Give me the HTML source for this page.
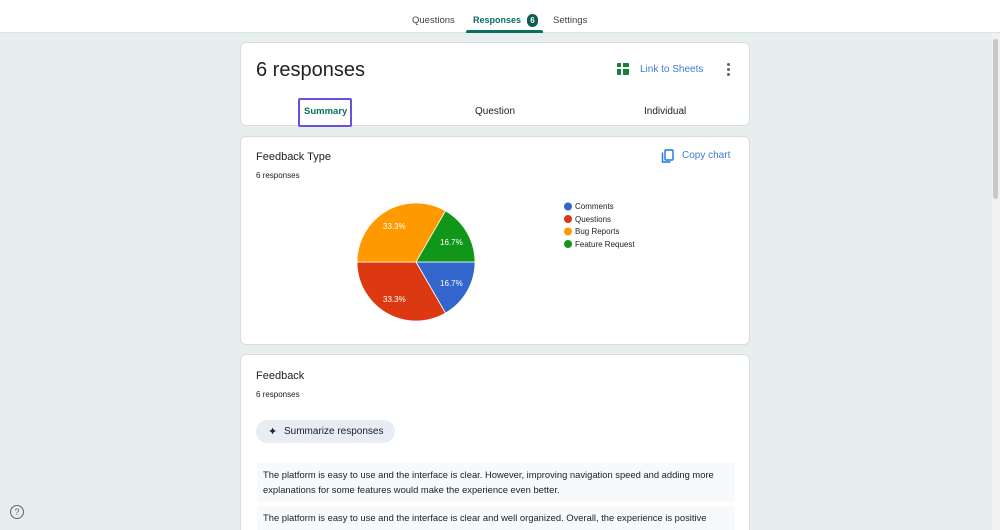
<!DOCTYPE html>
<html><head><style>
*{box-sizing:border-box;margin:0;padding:0}
html,body{width:1000px;height:530px;overflow:hidden}
body{background:#e7efee;font-family:"Liberation Sans",Arial,sans-serif;color:#202124;position:relative}
.top{position:absolute;left:0;top:0;width:1000px;height:33px;background:#fff;border-bottom:1px solid #dde3e2}
.tab{position:absolute;top:15px;font-size:9.5px;color:#3c4043}
.card{position:absolute;left:240px;width:510px;background:#fff;border-radius:6px;border:1px solid #dadce0}
.abs{position:absolute}
.sb{position:absolute;right:0;top:33px;width:8px;height:497px;background:#f1f1f1}
.sb div{position:absolute;left:1px;top:6px;width:5px;height:160px;background:#c8c8c8;border-radius:3px}
.resp{position:absolute;left:16px;width:478px;background:#f8f9fa;font-size:9.4px;line-height:15px;padding:4px 6px;color:#202124;white-space:nowrap}
</style></head><body>
<div class="top">
<span class="tab" style="left:412px">Questions</span>
<span class="tab" style="left:473px;color:#0b6e5f;font-weight:bold;font-size:9px">Responses</span>
<span class="abs" style="left:527px;top:14px;width:11px;height:13px;border-radius:6px;background:#0b5e52;color:#fff;font-size:8px;text-align:center;line-height:13px;font-weight:bold">6</span>
<span class="tab" style="left:553px">Settings</span>
<div class="abs" style="left:466px;top:30px;width:77px;height:3px;background:#0b6e5f;border-radius:2px 2px 0 0"></div>
</div>
<div class="sb"><div></div></div>

<div class="card" style="top:42px;height:84px">
<div class="abs" style="left:15px;top:16px;font-size:20px">6 responses</div>
<div class="abs" style="left:376px;top:20px;width:12px;height:12px;background:#188038;border-radius:1px"><div class="abs" style="left:4px;top:0;width:1.5px;height:12px;background:#fff"></div><div class="abs" style="left:0;top:4px;width:12px;height:1.5px;background:#fff"></div></div>
<div class="abs" style="left:399px;top:21px;font-size:10px;color:#3f7bd6">Link to Sheets</div>
<div class="abs" style="left:486px;top:20px;width:3px;font-size:0">
<div style="width:3px;height:3px;border-radius:50%;background:#5f6368;margin-bottom:2px"></div><div style="width:3px;height:3px;border-radius:50%;background:#5f6368;margin-bottom:2px"></div><div style="width:3px;height:3px;border-radius:50%;background:#5f6368"></div></div>
<div class="abs" style="left:57px;top:55px;width:54px;height:29px;border:2px solid #6a4fe0;border-radius:2px"></div>
<div class="abs" style="left:63px;top:63px;font-size:9.5px;color:#0b6e5f;font-weight:bold">Summary</div>
<div class="abs" style="left:234px;top:63px;font-size:10px">Question</div>
<div class="abs" style="left:403px;top:63px;font-size:10px">Individual</div>
</div>

<div class="card" style="top:136px;height:209px">
<div class="abs" style="left:15px;top:14px;font-size:11px">Feedback Type</div>
<div class="abs" style="left:15px;top:34px;font-size:8px">6 responses</div>
<svg class="abs" style="left:420px;top:12px" width="14" height="14" viewBox="0 0 14 14"><rect x="4" y="1" width="8" height="10" rx="1" fill="none" stroke="#1a73e8" stroke-width="1.4"/><path d="M1.5 3.5V13h8" fill="none" stroke="#1a73e8" stroke-width="1.4"/></svg>
<div class="abs" style="left:441px;top:13px;font-size:10px;color:#3f7bd6">Copy chart</div>
</div>
<svg class="abs" style="left:0;top:0" width="1000" height="530">
<g stroke="#fff" stroke-width="0.8">
<path d="M416 262 L475 262 A59 59 0 0 1 445.5 313.1Z" fill="#3366cc"/>
<path d="M416 262 L445.5 313.1 A59 59 0 0 1 357 262Z" fill="#dc3912"/>
<path d="M416 262 L357 262 A59 59 0 0 1 445.5 210.9Z" fill="#ff9900"/>
<path d="M416 262 L445.5 210.9 A59 59 0 0 1 475 262Z" fill="#109618"/>
</g>
<g font-family="Liberation Sans,Arial" font-size="8" fill="#fff">
<text x="383" y="229">33.3%</text><text x="440" y="245">16.7%</text>
<text x="440" y="286">16.7%</text><text x="383" y="302">33.3%</text>
</g>
<g font-family="Liberation Sans,Arial" font-size="8" fill="#222">
<circle cx="568" cy="206.5" r="4" fill="#3366cc"/><text x="575" y="209">Comments</text>
<circle cx="568" cy="219" r="4" fill="#dc3912"/><text x="575" y="222">Questions</text>
<circle cx="568" cy="231.5" r="4" fill="#ff9900"/><text x="575" y="234">Bug Reports</text>
<circle cx="568" cy="244" r="4" fill="#109618"/><text x="575" y="247">Feature Request</text>
</g>
</svg>

<div class="card" style="top:354px;height:200px">
<div class="abs" style="left:15px;top:15px;font-size:11px">Feedback</div>
<div class="abs" style="left:15px;top:35px;font-size:8px">6 responses</div>
<div class="abs" style="left:15px;top:65px;width:139px;height:23px;border-radius:12px;background:#e8ecf3"></div>
<div class="abs" style="left:27px;top:70px;font-size:11px;color:#202124">✦</div>
<div class="abs" style="left:43px;top:71px;font-size:10px">Summarize responses</div>
<div class="resp" style="top:108px;height:39px">The platform is easy to use and the interface is clear. However, improving navigation speed and adding more<br>explanations for some features would make the experience even better.</div>
<div class="resp" style="top:151px;height:40px">The platform is easy to use and the interface is clear and well organized. Overall, the experience is positive</div>
</div>

<div class="abs" style="left:10px;top:505px;width:14px;height:14px;border:1.2px solid #5f6368;border-radius:50%;font-size:9px;text-align:center;line-height:12px;color:#5f6368">?</div>
</body></html>
